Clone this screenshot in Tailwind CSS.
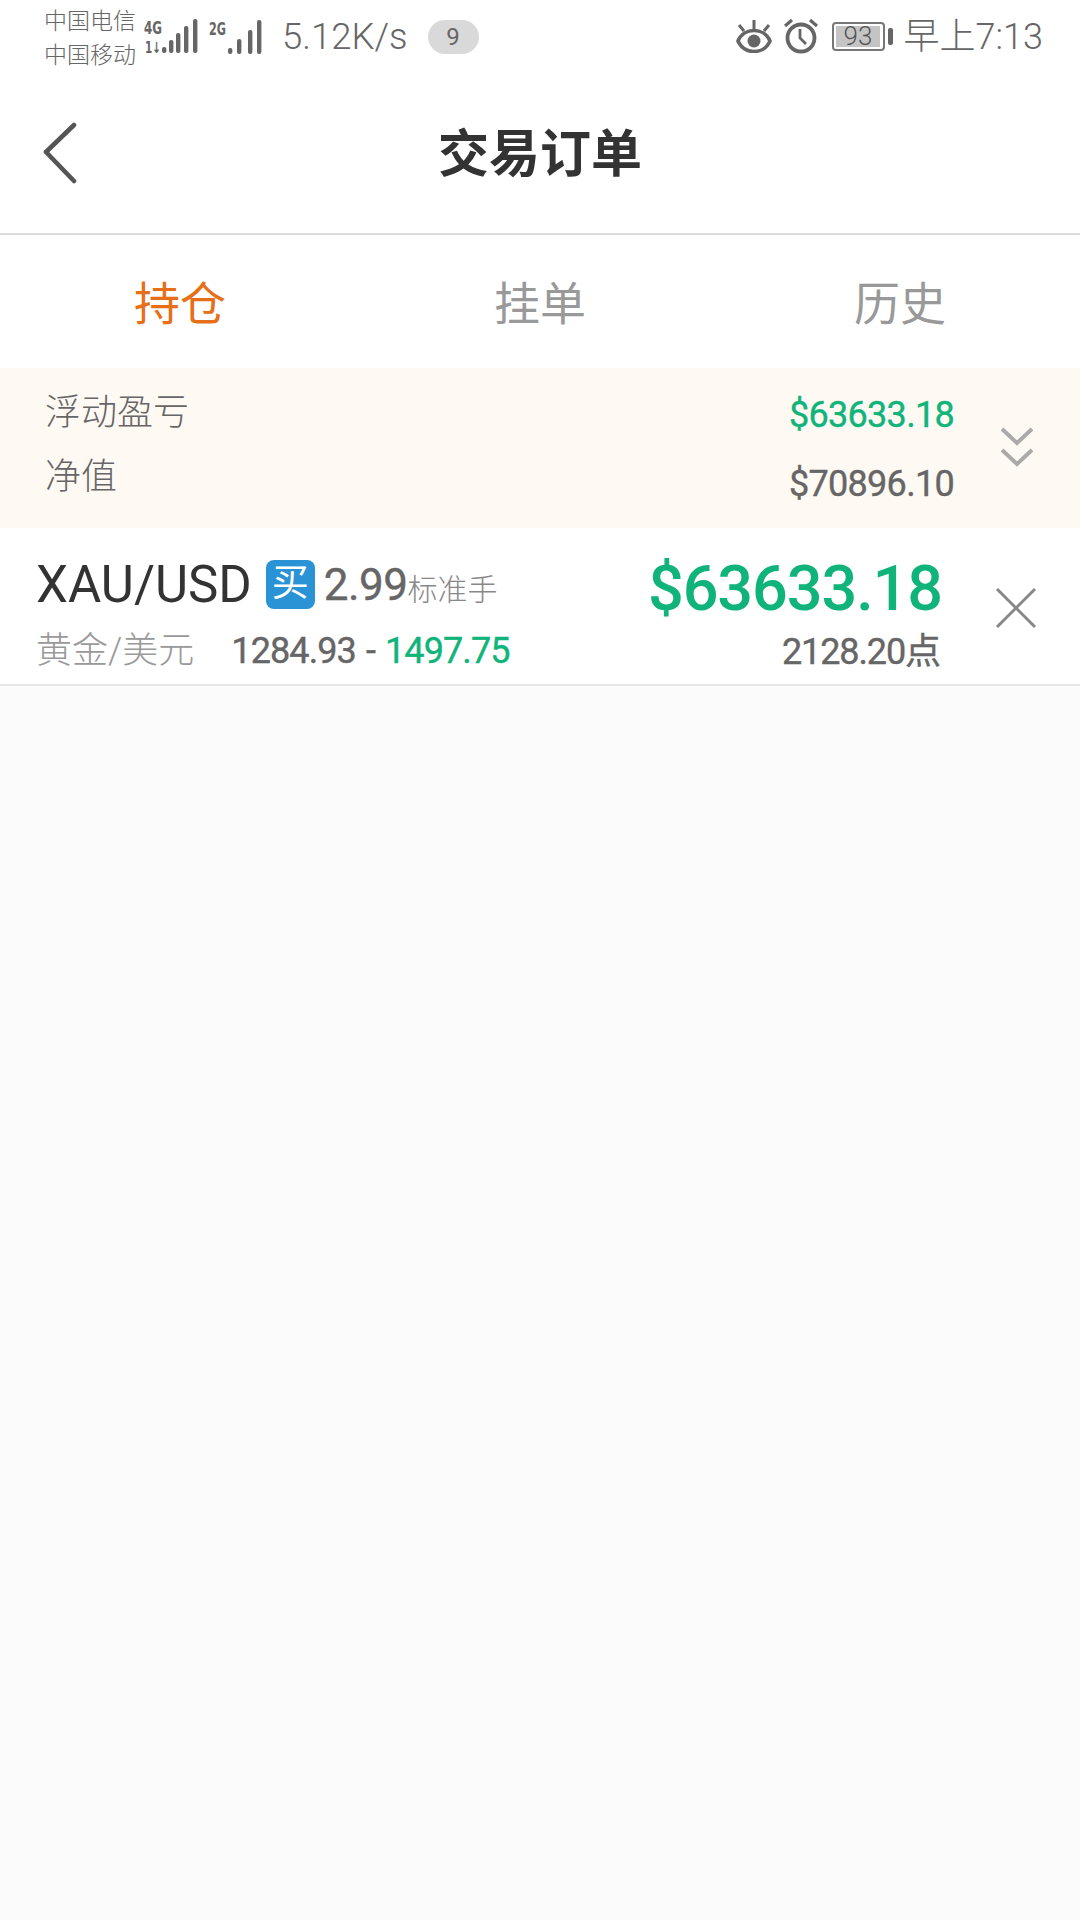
<!DOCTYPE html>
<html lang="zh-CN">
<head>
  <meta charset="UTF-8" />
  <meta name="viewport" content="width=device-width, initial-scale=1.0"/>
  <title>交易订单</title>
  <script src="https://cdn.jsdelivr.net/npm/@tailwindcss/browser@4"></script>
</head>
<body class="bg-[#fbfbfb] font-['Roboto','Noto_Sans_CJK_SC',sans-serif]">
  <main class="w-[1080px] h-[1920px] flex flex-col">

    <!-- Status bar -->
    <div class="h-[72px] bg-white flex items-center text-[#666] pl-[44px] pr-[37px]">
      <div class="w-[95px] text-[23px] leading-[34px] font-light mt-[5px] whitespace-nowrap">
        <div>中国电信</div>
        <div>中国移动</div>
      </div>
      <svg class="ml-[5px] mt-[3px]" width="54" height="40" viewBox="0 0 54 40" fill="#666">
        <text x="0" y="16" font-family="DejaVu Sans" font-size="17" font-weight="700" textLength="18" lengthAdjust="spacingAndGlyphs">4G</text>
        <text x="1" y="35" font-family="DejaVu Sans" font-size="15" font-weight="700" textLength="16" lengthAdjust="spacingAndGlyphs">1↓</text>
        <rect x="18" y="29" width="4.4" height="6" rx="2"/>
        <rect x="25" y="22" width="4.4" height="13" rx="2"/>
        <rect x="32" y="15" width="4.4" height="20" rx="2"/>
        <rect x="40" y="8" width="4.4" height="27" rx="2"/>
        <rect x="49" y="1" width="4.4" height="34" rx="2"/>
      </svg>
      <svg class="ml-[11px] mt-[1px]" width="54" height="36" viewBox="0 0 54 36" fill="#666">
        <text x="0" y="16" font-family="DejaVu Sans" font-size="17" font-weight="700" textLength="17" lengthAdjust="spacingAndGlyphs">2G</text>
        <rect x="19" y="29" width="4.4" height="6" rx="2"/>
        <rect x="28" y="20" width="4.4" height="15" rx="2"/>
        <rect x="39" y="11" width="4.4" height="24" rx="2"/>
        <rect x="48" y="1" width="4.4" height="34" rx="2"/>
      </svg>
      <span class="ml-[19px] text-[36.5px] font-light whitespace-nowrap mt-[3px]">5.12K/s</span>
      <span class="ml-[20px] w-[51px] h-[34px] rounded-full bg-[#d9d9d9] flex items-center justify-center text-[24px] mt-[1px]">9</span>

      <div class="ml-auto flex items-center">
        <svg width="36" height="34" viewBox="0 0 36 34" fill="none" stroke="#666" stroke-width="3.6">
          <path d="M2 22C8 8 28 8 34 22C28 36 8 36 2 22Z"/>
          <circle cx="18" cy="22" r="6.5" fill="#666" stroke="none"/>
          <path d="M18 10V1M8 12L3 6M28 12L33 6" stroke-width="3"/>
        </svg>
        <svg class="ml-[12px]" width="34" height="36" viewBox="0 0 34 36" fill="none" stroke="#666" stroke-width="3.8">
          <circle cx="17" cy="20" r="13.5"/>
          <path d="M16 11V20L22 26" stroke-width="2.8"/>
          <path d="M1 8L8 2M33 8L26 2" stroke-width="3.2"/>
        </svg>
        <div class="ml-[14px] w-[53px] h-[29px] border-2 border-[#777] rounded-[4px] p-[2px] relative flex">
          <div class="w-[44px] bg-[#c4c4c4]"></div>
          <span class="absolute inset-0 flex items-center justify-center text-[26px] font-light text-[#555]">93</span>
        </div>
        <div class="ml-[3px] w-[5px] h-[17px] rounded-[2px] bg-[#666]"></div>
        <span class="ml-[11px] text-[36px] font-light whitespace-nowrap mt-[2px]">早上7:13</span>
      </div>
    </div>

    <!-- Header -->
    <header class="h-[163px] bg-white border-b-2 border-[#dcdcdc] relative flex items-center justify-center">
      <svg class="absolute left-[42px] top-[50px]" width="36" height="62" viewBox="0 0 36 62" fill="none" stroke="#555" stroke-width="4.6" stroke-linecap="round" stroke-linejoin="round">
        <path d="M32 3L4 30L32 59"/>
      </svg>
      <h1 class="text-[51px] font-bold text-[#333] mt-[6px]">交易订单</h1>
    </header>

    <!-- Tabs -->
    <nav class="h-[133px] bg-white grid grid-cols-3 items-center text-center text-[46px] text-[#999] pt-[5px]">
      <div class="text-[#e66f17]">持仓</div>
      <div>挂单</div>
      <div>历史</div>
    </nav>

    <!-- Summary -->
    <section class="h-[160px] bg-[#fff9f3] flex items-center pl-[45px] pr-[47px]">
      <div class="flex flex-col gap-[20px] text-[36px] leading-[44px] font-light text-[#666] -mt-[6px]">
        <div>浮动盈亏</div>
        <div>净值</div>
      </div>
      <div class="ml-auto flex flex-col gap-[26px] text-[36px] leading-[43px] text-right tracking-[-0.7px] mt-[3px] [-webkit-text-stroke:0.4px_currentColor]">
        <div class="text-[#10b47a]">$63633.18</div>
        <div class="text-[#666]">$70896.10</div>
      </div>
      <svg class="ml-[47px] -mt-[2px]" width="32" height="40" viewBox="0 0 32 40" fill="none" stroke="#aaa" stroke-width="4">
        <path d="M1 2L16 16L31 2"/>
        <path d="M1 23L16 37L31 23"/>
      </svg>
    </section>

    <!-- Position row -->
    <section class="h-[158px] bg-white border-b-2 border-[#e6e6e6] flex items-start pl-[36px] pr-[43px]">
      <div class="pt-[25px]">
        <div class="flex items-center h-[64px]">
          <span class="text-[51px] text-[#333] whitespace-nowrap">XAU/USD</span>
          <span class="ml-[14px] -mt-[2px] w-[49px] h-[49px] rounded-[8px] bg-[#2a93d5] text-white text-[37px] flex items-center justify-center">买</span>
          <span class="ml-[9px] text-[44px] text-[#666] tracking-[-0.5px] [-webkit-text-stroke:0.4px_currentColor]">2.99</span>
          <span class="mt-[8px] text-[30px] font-light text-[#888]">标准手</span>
        </div>
        <div class="flex items-center mt-[9px] h-[50px]">
          <span class="text-[36px] font-light text-[#999] whitespace-nowrap">黄金/美元</span>
          <span class="ml-[37px] text-[36px] text-[#666] whitespace-nowrap tracking-[-0.9px] [-webkit-text-stroke:0.4px_currentColor]">1284.93 <span class="mx-[2px]">-</span> <span class="text-[#10b47a]">1497.75</span></span>
        </div>
      </div>
      <div class="ml-auto text-right pt-[26px]">
        <div class="text-[63px] leading-[70px] text-[#10b47a] font-medium tracking-[-1.1px]">$63633.18</div>
        <div class="text-[36px] leading-[44px] text-[#666] tracking-[-1.1px] mt-[6px] mr-[2px] [-webkit-text-stroke:0.4px_currentColor]">2128.20点</div>
      </div>
      <svg class="ml-[53px] mt-[59px]" width="42" height="42" viewBox="0 0 42 42" fill="none" stroke="#888" stroke-width="3">
        <path d="M2 2L40 40M40 2L2 40"/>
      </svg>
    </section>

  </main>
</body>
</html>
